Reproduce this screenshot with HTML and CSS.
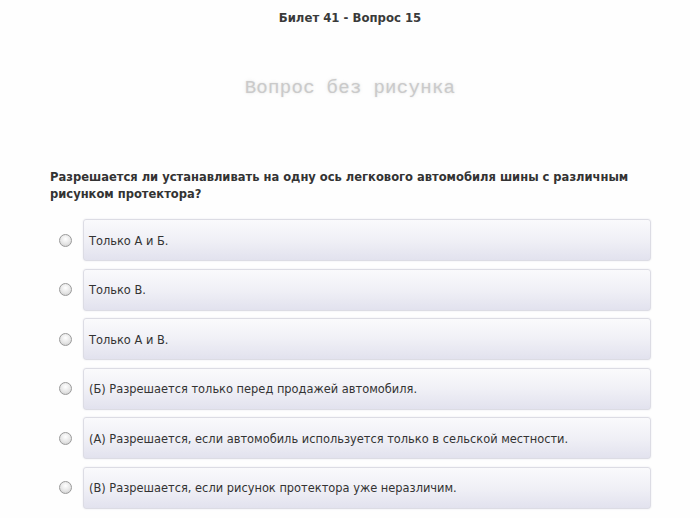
FILE: index.html
```html
<!DOCTYPE html>
<html lang="ru">
<head>
<meta charset="utf-8">
<link rel="stylesheet" href="styles.css">
</head>
<body>
<div class="page">
  <h1 class="ticket">Билет 41 - Вопрос 15</h1>
  <div class="noimage">Вопрос без рисунка</div>
  <p class="question">Разрешается ли устанавливать на одну ось легкового автомобиля шины с различным рисунком протектора?</p>
  <ul class="answers">
    <li class="answer"><span class="radio"></span><span class="box">Только А и Б.</span></li>
    <li class="answer"><span class="radio"></span><span class="box">Только В.</span></li>
    <li class="answer"><span class="radio"></span><span class="box">Только А и В.</span></li>
    <li class="answer"><span class="radio"></span><span class="box">(Б) Разрешается только перед продажей автомобиля.</span></li>
    <li class="answer"><span class="radio"></span><span class="box">(А) Разрешается, если автомобиль используется только в сельской местности.</span></li>
    <li class="answer"><span class="radio"></span><span class="box">(В) Разрешается, если рисунок протектора уже неразличим.</span></li>
  </ul>
</div>
</body>
</html>
```
FILE: styles.css
```css
html, body {
  margin: 0;
  padding: 0;
  background: #fefefe;
}
body {
  font-family: "DejaVu Sans Condensed", "DejaVu Sans", sans-serif;
  color: #333;
}
.page {
  width: 700px;
  height: 518px;
  overflow: hidden;
}
.ticket {
  margin: 0;
  padding-top: 10px;
  height: 23px;
  font-size: 13px;
  line-height: 16px;
  text-align: center;
  font-weight: bold;
  color: #3a3a3a;
}
.noimage {
  margin-top: 45px;
  height: 20px;
  font-family: "Liberation Mono", monospace;
  font-size: 19px;
  line-height: 20px;
  text-align: center;
  color: #cacaca;
  text-shadow: 0 0 2px #e4e4e4, 0 0 5px #ececec;
  letter-spacing: 0.3px;
}
.question {
  margin: 70px 0 0 50px;
  width: 600px;
  font-size: 12.8px;
  line-height: 17px;
  font-weight: bold;
  color: #333;
}
.answers {
  list-style: none;
  margin: 17px 0 0 0;
  padding: 0;
  display: flex;
  flex-direction: column;
  gap: 7.6px;
}
.answer {
  display: flex;
  align-items: center;
  height: 42px;
}
.radio {
  width: 11px;
  height: 11px;
  margin-left: 59px;
  margin-right: 11px;
  border-radius: 50%;
  border: 1px solid #9a9a9a;
  background: radial-gradient(circle at 50% 35%, #ffffff 0%, #e6e6e6 55%, #c8c8c8 100%);
  box-sizing: content-box;
}
.box {
  box-sizing: border-box;
  width: 568px;
  height: 42px;
  display: flex;
  align-items: center;
  padding-left: 5px;
  font-size: 12.7px;
  color: #333;
  border: 1px solid #dcdce4;
  border-radius: 3px;
  background: linear-gradient(to bottom, #fafafc 0%, #f0f0f6 50%, #e2e2ee 100%);
  box-shadow: 0 0 2px #e8e8ee;
}
```
